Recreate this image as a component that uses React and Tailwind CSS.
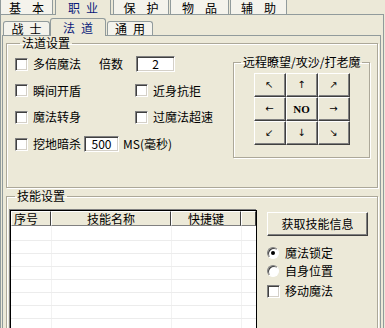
import React from "react";

const font = "font-['Noto_Sans_CJK_SC','Noto_Sans_CJK_JP',sans-serif]";

const Check = () => (
  <span className="inline-block w-[13px] h-[13px] shrink-0 bg-white border border-t-[#808080] border-l-[#808080] border-b-white border-r-white shadow-[inset_1px_1px_0_#404040,inset_-1px_-1px_0_#d4d0c8]" />
);

const Radio = ({ checked }) => (
  <span className="relative inline-flex items-center justify-center w-[12px] h-[12px] shrink-0 rounded-full bg-white border border-t-[#808080] border-l-[#808080] border-b-white border-r-white shadow-[inset_1px_1px_0_#404040]">
    {checked && <span className="w-[4px] h-[4px] rounded-full bg-black" />}
  </span>
);

const Edit = ({ value, w }) => (
  <span className={`inline-flex items-center justify-center h-[16px] ${w} bg-white border border-t-[#808080] border-l-[#808080] border-b-white border-r-white shadow-[inset_1px_1px_0_#404040,inset_-1px_-1px_0_#d4d0c8] text-[12px]`}>
    {value}
  </span>
);

const CheckRow = ({ label }) => (
  <div className="flex items-center">
    <Check />
    <span className="ml-[5px] whitespace-nowrap">{label}</span>
  </div>
);

const TopTab = ({ label, w, ml, selected }) => (
  <div
    className={`${w} ${ml} flex items-center justify-center border border-t-0 border-b-0 border-[#919B9C] leading-[13px] whitespace-nowrap ${
      selected ? "relative z-10 h-[15px] bg-[#ECE9D8] text-[#0A1A7A]" : "h-[14px] bg-[#F4F3EC]"
    }`}
  >
    <span className={selected ? "tracking-[6px] mr-[-6px]" : "tracking-[11px] mr-[-11px]"}>{label}</span>
  </div>
);

const SubTab = ({ label, w, ml, selected }) => (
  <div
    className={`${w} ${ml} flex items-center justify-center border border-b-0 border-[#919B9C] rounded-t-[3px] whitespace-nowrap ${
      selected ? "relative z-10 h-[18px] bg-[#ECE9D8] text-[#0A1A7A]" : "mt-[3px] h-[14px] bg-[#F4F3EC]"
    }`}
  >
    <span className="tracking-[6px] mr-[-6px]">{label}</span>
  </div>
);

const arrows = ["↖", "↑", "↗", "←", "NO", "→", "↙", "↓", "↘"];

const Fieldset = ({ legend, className, legendClass, children }) => (
  <fieldset className={`border border-[#ACA899] shadow-[inset_1px_1px_0_#fff,1px_1px_0_#fff] ${className}`}>
    <legend className={`px-[2px] leading-[12px] whitespace-nowrap ${legendClass}`}>{legend}</legend>
    {children}
  </fieldset>
);

const rows = [15, 13, 13, 13, 13, 13, 13, 13];

export default function App() {
  return (
    <div className={`w-[385px] h-[328px] overflow-hidden bg-[#ECE9D8] text-[12px] leading-none text-black ${font}`}>
      {/* top tabs */}
      <div className="flex items-start h-[14px]">
        <TopTab label="基本" w="w-[53px]" ml="ml-0" />
        <TopTab label="职业" w="w-[56px]" ml="ml-[2px]" selected />
        <TopTab label="保护" w="w-[56px]" ml="ml-[2px]" />
        <TopTab label="物品" w="w-[59px]" ml="ml-[1px]" />
        <TopTab label="辅助" w="w-[57px]" ml="ml-[1px]" />
      </div>

      <div className="w-[384px] h-[314px] border border-b-0 border-[#919B9C] pt-[3px]">
        {/* sub tabs */}
        <div className="flex items-start h-[17px]">
          <SubTab label="战士" w="w-[47px]" ml="ml-[2px]" />
          <SubTab label="法道" w="w-[56px]" ml="ml-0" selected />
          <SubTab label="通用" w="w-[46px]" ml="ml-[1px]" />
        </div>

        <div className="ml-[1px] w-[379px] h-[300px] border border-b-0 border-[#919B9C] pl-[3px]">
          {/* 法道设置 */}
          <Fieldset legend="法道设置" className="mt-[1px] w-[372px] h-[151px] pl-[8px]" legendClass="ml-[5px]">
            <div className="flex">
              <div className="w-[218px] mt-[2px] flex flex-col">
                <div className="h-[26px] flex items-center">
                  <CheckRow label="多倍魔法" />
                  <span className="ml-[18px]">倍数</span>
                  <span className="ml-[13px]">
                    <Edit value="2" w="w-[39px]" />
                  </span>
                </div>
                <div className="h-[27px] flex items-center">
                  <div className="w-[120px]">
                    <CheckRow label="瞬间开盾" />
                  </div>
                  <CheckRow label="近身抗拒" />
                </div>
                <div className="h-[26px] flex items-center">
                  <div className="w-[120px]">
                    <CheckRow label="魔法转身" />
                  </div>
                  <CheckRow label="过魔法超速" />
                </div>
                <div className="h-[28px] flex items-center">
                  <CheckRow label="挖地暗杀" />
                  <span className="ml-[3px]">
                    <Edit value="500" w="w-[35px]" />
                  </span>
                  <span className="ml-[4px] whitespace-nowrap">MS(毫秒)</span>
                </div>
              </div>

              <Fieldset legend="远程瞭望/攻沙/打老魔" className="mt-[7px] w-[137px] pb-[11px]" legendClass="ml-[7px]">
                <div className="mt-[5px] mx-auto w-[96px] grid grid-cols-[32px_32px_32px] grid-rows-[24px_24px_24px]">
                  {arrows.map((a) => (
                    <div
                      key={a}
                      className={`flex items-center justify-center border border-t-white border-l-white border-b-[#404040] border-r-[#404040] shadow-[inset_-1px_-1px_0_#808080] ${
                        a === "NO" ? "text-[11px] font-bold font-['Liberation_Serif',serif]" : "text-[10px] font-['DejaVu_Sans',sans-serif]"
                      }`}
                    >
                      {a}
                    </div>
                  ))}
                </div>
              </Fieldset>
            </div>
          </Fieldset>

          {/* 技能设置 */}
          <Fieldset legend="技能设置" className="mt-[2px] w-[372px] h-[160px] pl-[3px]" legendClass="ml-[5px]">
            <div className="flex">
              <div className="mt-[8px] w-[247px] h-[130px] border border-black shadow-[-1px_-1px_0_#808080] bg-white overflow-hidden">
                <div className="flex h-[15px] bg-[#ECE9D8]">
                  {[
                    ["序号", "w-[40px] justify-start pl-[2px]"],
                    ["技能名称", "w-[120px] justify-center"],
                    ["快捷键", "w-[70px] justify-center"],
                    ["", "flex-1"],
                  ].map(([h, c], i) => (
                    <div
                      key={i}
                      className={`${c} flex items-center border border-t-white border-l-white border-b-[#808080] border-r-[#404040]`}
                    >
                      {h}
                    </div>
                  ))}
                </div>
                {rows.map((h, i) => (
                  <div key={i} className={`flex ${h === 15 ? "h-[15px]" : "h-[13px]"} border-b border-[#ececec]`}>
                    <div className="w-[41px] border-r border-[#f2f2f2]" />
                    <div className="w-[120px] border-r border-[#f2f2f2]" />
                    <div className="w-[70px] border-r border-[#f2f2f2]" />
                    <div className="flex-1" />
                  </div>
                ))}
              </div>

              <div className="ml-[10px] flex flex-col">
                <div className="mt-[10px] w-[101px] h-[24px] flex items-center justify-center border border-t-white border-l-white border-b-[#404040] border-r-[#404040] shadow-[inset_-1px_-1px_0_#808080]">
                  获取技能信息
                </div>
                <div className="mt-[8px] h-[18px] flex items-center">
                  <Radio checked />
                  <span className="ml-[6px]">魔法锁定</span>
                </div>
                <div className="h-[18px] flex items-center">
                  <Radio />
                  <span className="ml-[6px]">自身位置</span>
                </div>
                <div className="mt-[2px] h-[18px] flex items-center">
                  <Check />
                  <span className="ml-[5px]">移动魔法</span>
                </div>
              </div>
            </div>
          </Fieldset>
        </div>
      </div>
    </div>
  );
}
